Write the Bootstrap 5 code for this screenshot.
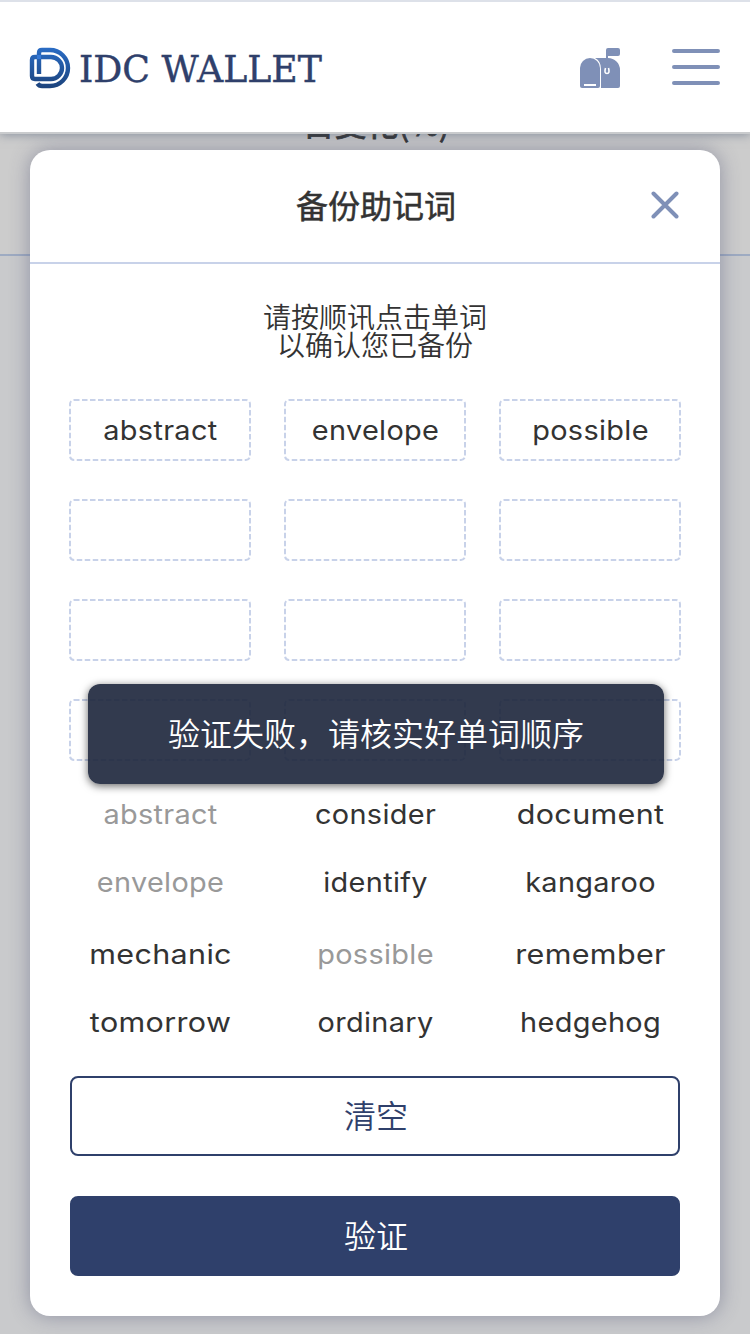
<!DOCTYPE html>
<html lang="zh-CN">
<head>
<meta charset="utf-8">
<meta name="viewport" content="width=device-width, initial-scale=1">
<title>IDC WALLET</title>
<link href="https://cdn.jsdelivr.net/npm/bootstrap@5.3.0/dist/css/bootstrap.min.css" rel="stylesheet">
<style>
body{height:1334px;overflow:hidden;background:#c9cacc;color:#333;font-family:Inter,"Noto Sans CJK SC",sans-serif}
.cjk{font-family:"Noto Sans CJK SC",sans-serif}
.screen{height:1334px}
.behind{inset:0 0 auto;height:256px;background:#ccc;border-bottom:2px solid #9eabc2}
.behind-label{left:0;right:0;top:98px;padding-left:2px;font-size:32px;line-height:48px;font-weight:400;-webkit-text-stroke:.8px #333}
.topbar{z-index:2;height:134px;padding:0 30px;background:#fff;border-top:2px solid #dde1e9;border-bottom:2px solid #c9cbcd;box-shadow:0 0 10px rgba(75,90,115,.6)}
.logo{margin:2px 0 0 -2px}
.mail-icon{margin-top:2px}
.menu-icon{margin-left:51px}
.sheet{z-index:1;height:1166px;margin:16px 30px 0;border-radius:20px;background:#fff;box-shadow:0 0 20px rgba(70,75,110,.45)}
.sheet-head{height:114px;padding:0 0 5px 2px;border-bottom:2px solid #c8d2e9;font-size:32px;font-weight:400;-webkit-text-stroke:.5px #333}
.sheet-close{right:41px;top:41px;line-height:0}
.sheet-copy{margin-top:38px;font-size:28px;line-height:28px;font-weight:350}
.sheet-inner{padding:0 39px}
.slots{display:grid;grid-template-columns:repeat(3,182px);justify-content:space-between;row-gap:38px;margin-top:41px}
.slot{height:62px;padding:2px 0 0 1px;font-size:27px;letter-spacing:.3px;background:url("data:image/svg+xml,%3Csvg xmlns='http://www.w3.org/2000/svg' width='182' height='62'%3E%3Crect x='1' y='1' width='180' height='60' rx='4' fill='none' stroke='%23c8d2e9' stroke-width='2' stroke-dasharray='5.5 2.5'/%3E%3C/svg%3E")}
.slot span,.words span{transform:scaleX(1.07)}
.words{display:grid;grid-template-columns:repeat(3,182px);grid-template-rows:68px 72px 68px 68px;justify-content:space-between;margin-top:20px;font-size:27px;line-height:68px;letter-spacing:.3px;text-align:center}
.words span{padding-left:1px}
.words .wide{transform:scaleX(1.13)}
.used{color:#999}
.act{height:80px;margin:0 1px;padding:0 0 5px 2px;border:2px solid #2f406b;border-radius:8px;font-size:32px;font-weight:350}
.act-clear{margin-top:19px;color:#2f406b;background:#fff}
.act-check{margin-top:40px;color:#fff;background:#2f406b}
.notice{z-index:3;left:58px;top:534px;width:576px;height:100px;padding-bottom:5px;border-radius:12px;background:rgba(30,39,60,.91);box-shadow:0 2px 8px rgba(0,0,0,.6);color:#fff;font-size:32px;font-weight:350}
</style>
</head>
<body>
<div class="behind position-absolute"><div class="behind-label cjk position-absolute text-center">日变化(%)</div></div>
<div class="screen d-flow-root overflow-hidden position-relative">
<header class="topbar position-relative d-flex align-items-center justify-content-between">
  <svg class="logo" width="310" height="60" viewBox="28 38 310 60" role="img" aria-label="IDC WALLET">
    <defs><linearGradient id="blue" x1="0" y1="48" x2="0" y2="88" gradientUnits="userSpaceOnUse"><stop stop-color="#2a6cc4"/><stop offset="1" stop-color="#1c437c"/></linearGradient></defs>
    <g fill="none" stroke="url(#blue)" stroke-width="4.400">
      <path d="M39 74V53q0-3 3-3h8a18 18 0 0 1 0 36h-8q-3 0-4.500-2.500"/>
      <path d="M35 57h16a11 11 0 0 1 0 22H35q-3 0-3-3V60q0-3 3-3z"/>
    </g>
    <path fill="#3478d6" d="M37 55h4v4h-4z"/>
    <text x="79" y="81.500" textLength="243" lengthAdjust="spacingAndGlyphs" fill="#2f406b" stroke="#2f406b" stroke-width=".4" font-family="DejaVu Serif,serif" font-size="37">IDC WALLET</text>
  </svg>
  <div class="d-flex align-items-center">
    <svg class="mail-icon" width="42" height="42" viewBox="579 47 42 42" fill="#7f90b7">
      <path d="M590 58a10 10 0 0 1 10 10v18q0 2-2 2h-16q-2 0-2-2V68a10 10 0 0 1 10-10z"/>
      <path d="M595 58h11v-8q0-2 2-2h10q2 0 2 2v4q0 2-2 2h-10v2a12 12 0 0 1 12 12v16q0 2-2 2h-17V69q0-8-6-11z"/>
      <path d="M584 84h12v2h-12z" fill="#fff"/>
      <path d="M605.500 68q-1.700 5.500 1.500 5.500t1.500-5.500" fill="none" stroke="#fff" stroke-width="1.600"/>
    </svg>
    <svg class="menu-icon" width="48" height="36" viewBox="0 0 48 36" stroke="#7f90b7" stroke-width="4" stroke-linecap="round"><path d="M2 2h44M2 18h44M2 34h44"/></svg>
  </div>
</header>
<main class="sheet position-relative d-flex flex-column">
  <div class="sheet-head cjk position-relative d-flex flex-shrink-0 align-items-center justify-content-center">备份助记词
    <span class="sheet-close position-absolute"><svg width="28" height="28" viewBox="0 0 28 28" stroke="#7f90b7" stroke-width="4" stroke-linecap="round"><path d="M2.500 2.500l23 23M25.500 2.500l-23 23"/></svg></span>
  </div>
  <div class="sheet-copy cjk text-center">请按顺讯点击单词<br>以确认您已备份</div>
  <div class="sheet-inner">
    <div class="slots">
      <div class="slot d-flex align-items-center justify-content-center"><span>abstract</span></div>
      <div class="slot d-flex align-items-center justify-content-center"><span>envelope</span></div>
      <div class="slot d-flex align-items-center justify-content-center"><span>possible</span></div>
      <div class="slot"></div><div class="slot"></div><div class="slot"></div>
      <div class="slot"></div><div class="slot"></div><div class="slot"></div>
      <div class="slot"></div><div class="slot"></div><div class="slot"></div>
    </div>
    <div class="words">
      <span class="used">abstract</span><span>consider</span><span class="wide">document</span>
      <span class="used">envelope</span><span>identify</span><span>kangaroo</span>
      <span class="wide">mechanic</span><span class="used">possible</span><span class="wide">remember</span>
      <span class="wide">tomorrow</span><span>ordinary</span><span>hedgehog</span>
    </div>
    <div class="act act-clear cjk d-flex align-items-center justify-content-center" role="button">清空</div>
    <div class="act act-check cjk d-flex align-items-center justify-content-center" role="button">验证</div>
  </div>
  <div class="notice cjk position-absolute d-flex align-items-center justify-content-center" role="alert">验证失败，请核实好单词顺序</div>
</main>
</div>
<script src="https://cdn.jsdelivr.net/npm/bootstrap@5.3.0/dist/js/bootstrap.bundle.min.js"></script>
</body>
</html>
